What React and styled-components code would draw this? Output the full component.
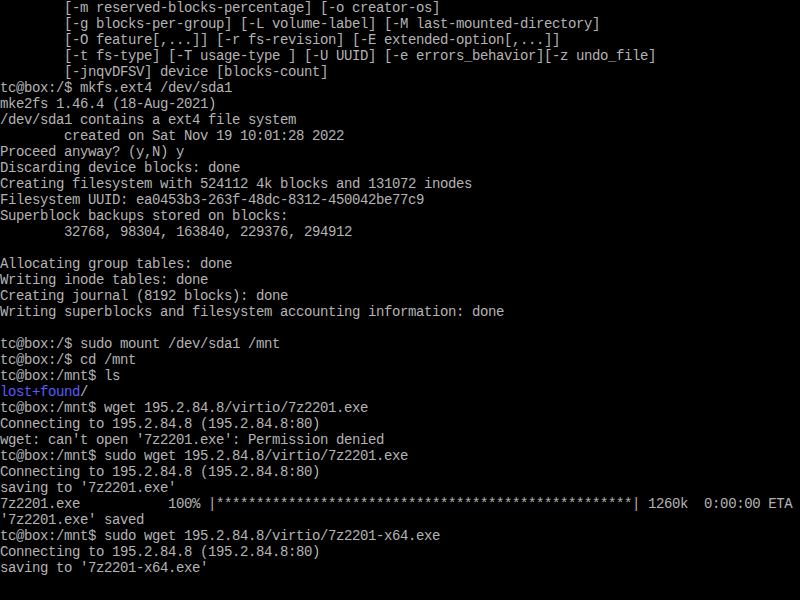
import * as React from "react";
import styled, {createGlobalStyle} from "styled-components";

const Global = createGlobalStyle`
    html, body {
        margin: 0;
        padding: 0;
        background: #000;
    }
`;

const Screen = styled.div`
    width: 800px;
    height: 600px;
    background: #000;
    overflow: hidden;
    display: flex;
    flex-direction: column;
    font-family: "Liberation Mono", "DejaVu Sans Mono", monospace;
    font-size: 14px;
    letter-spacing: -0.4px;
    color: #b4b4b4;
`;

const Line = styled.div`
    height: 16px;
    line-height: 16px;
    white-space: pre;
`;

const Dir = styled.span`
    color: #5c5cff;
`;

const stars = "*".repeat(52);

const lines = [
    "        [-m reserved-blocks-percentage] [-o creator-os]",
    "        [-g blocks-per-group] [-L volume-label] [-M last-mounted-directory]",
    "        [-O feature[,...]] [-r fs-revision] [-E extended-option[,...]]",
    "        [-t fs-type] [-T usage-type ] [-U UUID] [-e errors_behavior][-z undo_file]",
    "        [-jnqvDFSV] device [blocks-count]",
    "tc@box:/$ mkfs.ext4 /dev/sda1",
    "mke2fs 1.46.4 (18-Aug-2021)",
    "/dev/sda1 contains a ext4 file system",
    "        created on Sat Nov 19 10:01:28 2022",
    "Proceed anyway? (y,N) y",
    "Discarding device blocks: done",
    "Creating filesystem with 524112 4k blocks and 131072 inodes",
    "Filesystem UUID: ea0453b3-263f-48dc-8312-450042be77c9",
    "Superblock backups stored on blocks:",
    "        32768, 98304, 163840, 229376, 294912",
    "",
    "Allocating group tables: done",
    "Writing inode tables: done",
    "Creating journal (8192 blocks): done",
    "Writing superblocks and filesystem accounting information: done",
    "",
    "tc@box:/$ sudo mount /dev/sda1 /mnt",
    "tc@box:/$ cd /mnt",
    "tc@box:/mnt$ ls",
    null,
    "tc@box:/mnt$ wget 195.2.84.8/virtio/7z2201.exe",
    "Connecting to 195.2.84.8 (195.2.84.8:80)",
    "wget: can't open '7z2201.exe': Permission denied",
    "tc@box:/mnt$ sudo wget 195.2.84.8/virtio/7z2201.exe",
    "Connecting to 195.2.84.8 (195.2.84.8:80)",
    "saving to '7z2201.exe'",
    "7z2201.exe           100% |" + stars + "| 1260k  0:00:00 ETA",
    "'7z2201.exe' saved",
    "tc@box:/mnt$ sudo wget 195.2.84.8/virtio/7z2201-x64.exe",
    "Connecting to 195.2.84.8 (195.2.84.8:80)",
    "saving to '7z2201-x64.exe'",
];

const App = () => {
    return (
        <>
            <Global/>
            <Screen>
                {lines.map((text, i) =>
                    text === null ? (
                        <Line key={i}>
                            <Dir>lost+found</Dir>/
                        </Line>
                    ) : (
                        <Line key={i}>{text || " "}</Line>
                    )
                )}
            </Screen>
        </>
    );
};

export default App;
